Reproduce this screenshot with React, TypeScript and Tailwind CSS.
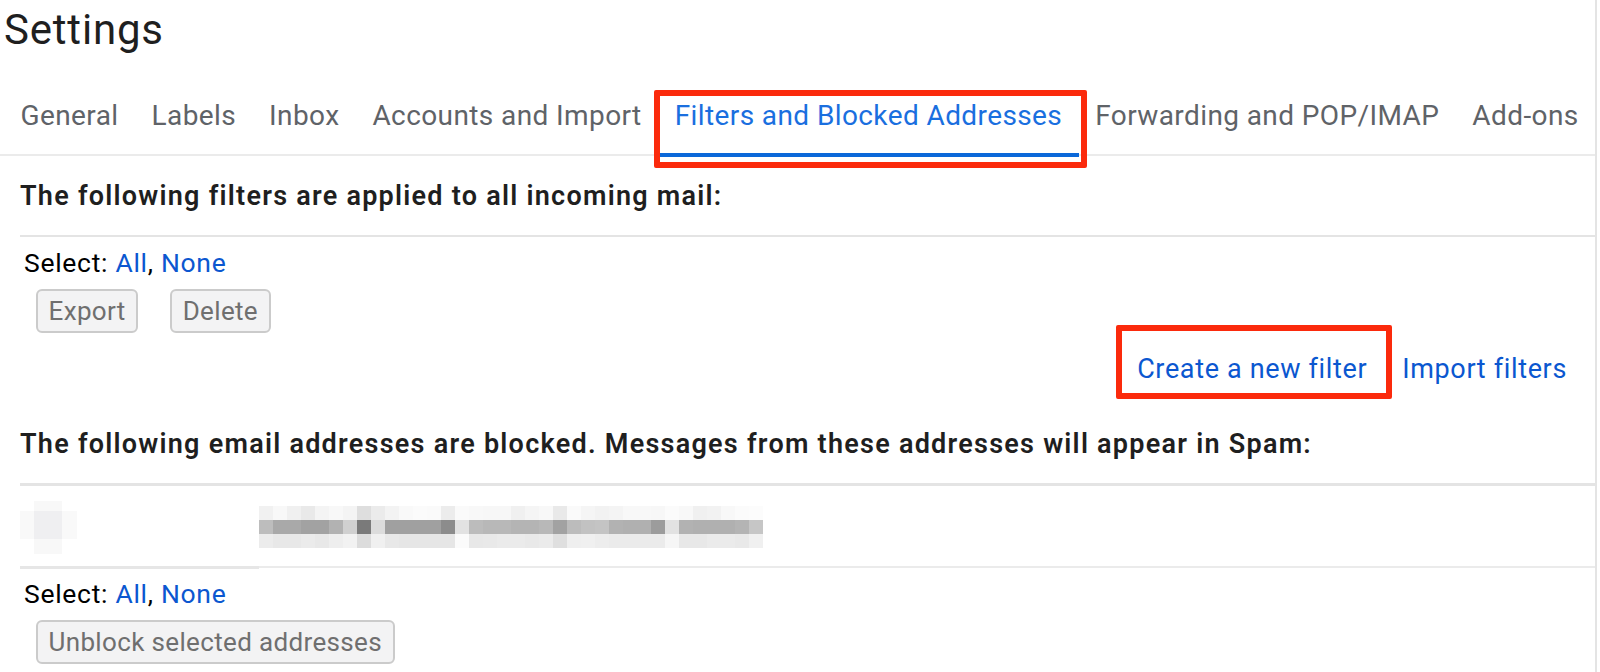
const font = "font-['Roboto','Liberation_Sans',sans-serif]"

const tabs = ['General', 'Labels', 'Inbox', 'Accounts and Import', 'Filters and Blocked Addresses', 'Forwarding and POP/IMAP', 'Add-ons']

// greys of the pixelated address, 14px per cell
const midRow = ['#bdbdbd', '#a9a9a9', '#a9a9a9', '#a2a2a2', '#a2a2a2', '#b2b2b2', '#d0d0d0', '#7a7a7a', '#dcdcdc', '#a0a0a0', '#a0a0a0', '#a0a0a0', '#a0a0a0', '#8c8c8c', '#e2e2e2', '#bcbcbc', '#b8b8b8', '#b8b8b8', '#b4b4b4', '#b4b4b4', '#b8b8b8', '#a2a2a2', '#bcbcbc', '#c2c2c2', '#c4c4c4', '#b2b2b2', '#b0b0b0', '#b0b0b0', '#9c9c9c', '#e2e2e2', '#b2b2b2', '#b0b0b0', '#b0b0b0', '#b0b0b0', '#b4b4b4', '#c6c6c6']
const topRow = ['#f1f1f1', '#f8f8f8', '#f0f0f0', '#e9e9e9', '#f4f4f4', '#f8f8f8', '#f4f4f4', '#dedede', '#ebebeb', '#f3f3f3', '#f9f9f9', '#fbfbfb', '#fafafa', '#ececec', '#fafafa', '#f8f8f8', '#f7f7f7', '#f7f7f7', '#f0f0f0', '#f5f5f5', '#f8f8f8', '#e9e9e9', '#fafafa', '#f5f5f5', '#f2f2f2', '#f4f4f4', '#f8f8f8', '#f8f8f8', '#f7f7f7', '#fbfbfb', '#f8f8f8', '#f0f0f0', '#f2f2f2', '#f8f8f8', '#fbfbfb', '#fcfcfc']
const lowRow = ['#ececec', '#e8e8e8', '#e8e8e8', '#ebebeb', '#e8e8e8', '#eeeeee', '#f2f2f2', '#dcdcdc', '#f0f0f0', '#e8e8e8', '#e6e6e6', '#e6e6e6', '#e6e6e6', '#e6e6e6', '#fbfbfb', '#e8e8e8', '#e9e9e9', '#ebebeb', '#ebebeb', '#e9e9e9', '#ebebeb', '#dfdfdf', '#efefef', '#f0f0f0', '#ededed', '#ebebeb', '#ebebeb', '#ebebeb', '#ebebeb', '#f6f6f6', '#e8e8e8', '#e8e8e8', '#ebebeb', '#ebebeb', '#e9e9e9', '#f0f0f0']

function Mosaic() {
  return (
    <svg width="504" height="42" viewBox="0 0 504 42" shapeRendering="crispEdges">
      {[topRow, midRow, lowRow].map((row, r) =>
        row.map((c, i) => <rect key={`${r}-${i}`} x={i * 14} y={r * 14} width="14" height="14" fill={c} />),
      )}
    </svg>
  )
}

function PaleBlock() {
  return (
    <svg width="57" height="53" viewBox="0 0 57 53" shapeRendering="crispEdges">
      <rect x="0" y="10" width="57" height="28" fill="#f9f9f9" />
      <rect x="14" y="0" width="28" height="53" fill="#f8f8f8" />
      <rect x="14" y="10" width="28" height="28" fill="#efeff1" />
    </svg>
  )
}

function SelectRow() {
  return (
    <div className="h-[52px] pl-[24px] flex items-center text-[26.5px] tracking-[0.7px] text-black">
      Select:&nbsp;<a className="text-[#0b57d0]">All</a>,&nbsp;<a className="text-[#0b57d0]">None</a>
    </div>
  )
}

function GreyButton({ label }: { label: string }) {
  return (
    <button className="h-[44px] px-[10.5px] bg-[#f3f3f4] border-2 border-[#cbcbcb] rounded-[6px] text-[26px] tracking-[0.35px] text-[#6f6f6f] whitespace-nowrap">
      {label}
    </button>
  )
}

export default function App() {
  return (
    <div className={`${font} relative w-[1597px] h-[672px] bg-white border-r-2 border-[#e4e4e4] overflow-hidden`}>
      <div className="h-[79px] pl-[4px] text-[42px] tracking-[0.8px] leading-[60px] text-[#1f1f1f]">Settings</div>

      <div className="flex h-[77px] pl-[4px] border-b-2 border-[#ebebeb]">
        {tabs.map(t => (
          <div
            key={t}
            className={
              t === 'Filters and Blocked Addresses'
                ? 'shrink-0 whitespace-nowrap h-[78px] pb-[1px] px-[16.5px] flex items-center text-[28px] tracking-[0.4px] text-[#1a6fdf] border-b-4 border-[#0b68d9]'
                : 'shrink-0 whitespace-nowrap h-[78px] pb-[5px] px-[16.5px] flex items-center text-[28px] tracking-[0.4px] text-[#5f6368]'
            }
          >
            {t}
          </div>
        ))}
      </div>

      <div className="h-[81px] pt-[2px] ml-[20px] flex items-center border-b-2 border-[#e4e4e4] text-[27px] tracking-[1.25px] font-semibold text-[#1f1f1f]">
        The following filters are applied to all incoming mail:
      </div>

      <SelectRow />
      <div className="flex gap-[32px] ml-[36px]">
        <GreyButton label="Export" />
        <GreyButton label="Delete" />
      </div>

      <div className="h-[70px] pt-[2px] pr-[28px] flex items-center justify-end gap-[35px] text-[27px] tracking-[0.65px] text-[#0b57d0]">
        <a>Create a new filter</a>
        <a>Import filters</a>
      </div>

      <div className="h-[83px] pt-[3px] ml-[20px] flex items-center border-b-[3px] border-[#e4e4e4] text-[27px] tracking-[1.25px] font-semibold text-[#1f1f1f]">
        The following email addresses are blocked. Messages from these addresses will appear in Spam:
      </div>

      <div className="h-[80px] pt-[2px] ml-[20px] flex items-center">
        <PaleBlock />
        <div className="ml-[182px]">
          <Mosaic />
        </div>
      </div>
      <div className="flex items-start ml-[20px] h-[2px]">
        <div className="w-[239px] h-[3px] bg-[#e6e6e6]" />
        <div className="flex-1 h-[2px] bg-[#ebebeb]" />
      </div>

      <SelectRow />
      <div className="ml-[36px]">
        <GreyButton label="Unblock selected addresses" />
      </div>

      <div className="absolute left-[654px] top-[90px] w-[433px] h-[78px] border-[6px] border-[#fb2a0c] rounded-[2px]" />
      <div className="absolute left-[1116px] top-[325px] w-[276px] h-[74px] border-[6px] border-[#fb2a0c] rounded-[2px]" />
    </div>
  )
}
